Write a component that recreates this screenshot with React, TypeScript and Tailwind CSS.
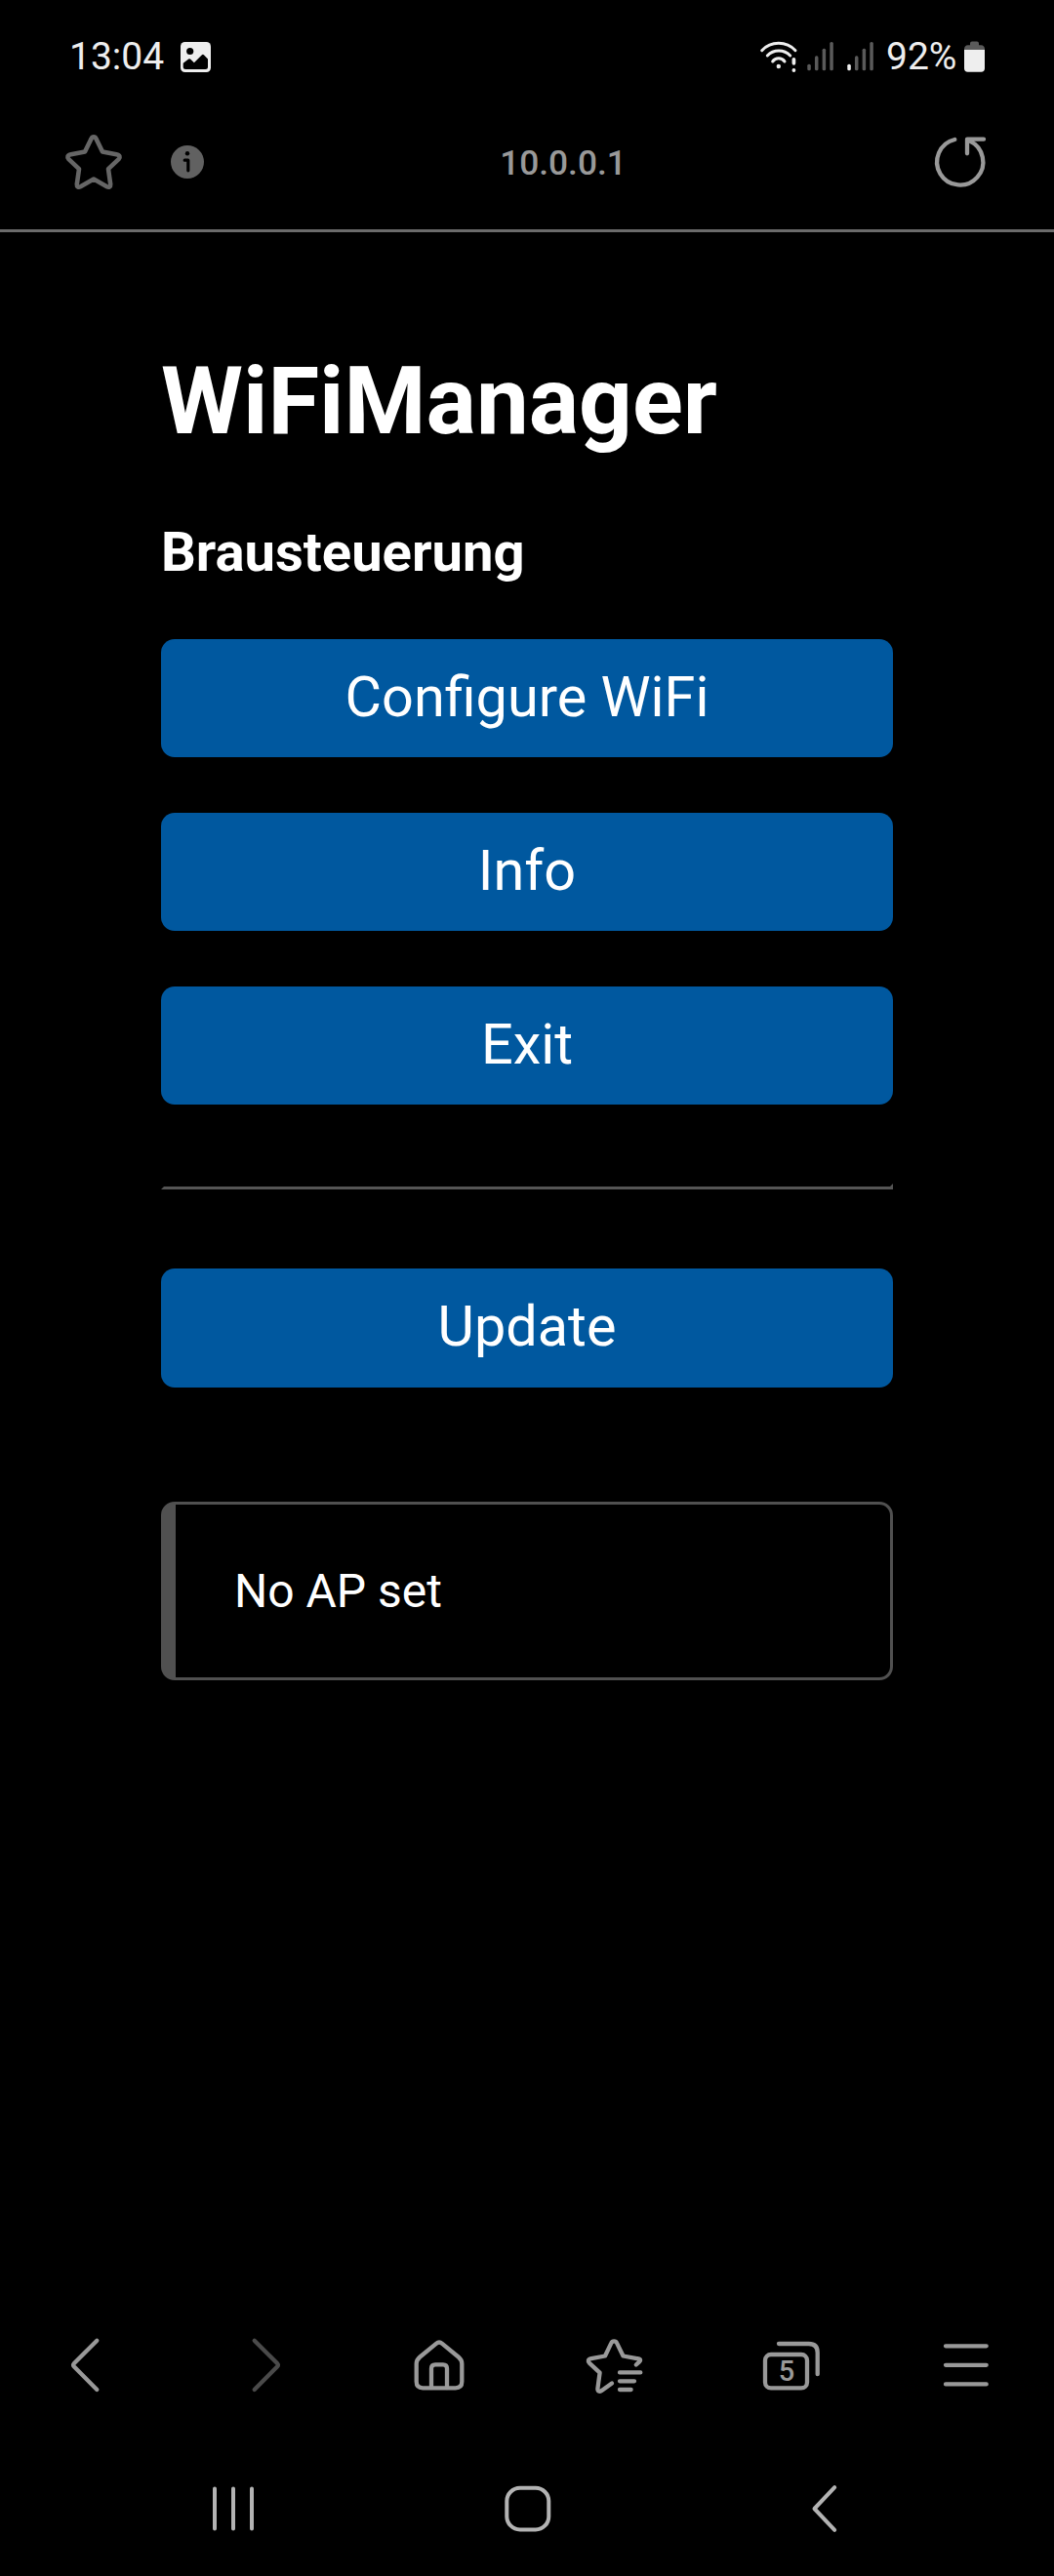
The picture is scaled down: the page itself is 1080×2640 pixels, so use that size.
import React from "react";

type IconProps = { children: React.ReactNode; className?: string; width?: number };

/** 64px stroked icon used by the browser and system bars. */
function Icon({ children, className = "", width = 4.3 }: IconProps) {
  return (
    <svg
      viewBox="0 0 64 64"
      fill="none"
      stroke="currentColor"
      strokeWidth={width}
      strokeLinecap="round"
      strokeLinejoin="round"
      className={`size-16 shrink-0 ${className}`}
    >
      {children}
    </svg>
  );
}

function SignalBars({ active }: { active: number }) {
  const tops = [24.7, 16.3, 8.7, 2];
  return (
    <svg viewBox="0 0 27 34" className="h-[34px] w-[27px] shrink-0">
      {tops.map((top, i) => (
        <rect
          key={top}
          x={0.3 + i * 7.67}
          y={top}
          width="3.5"
          height={31.3 - top}
          rx="1.6"
          fill={i < active ? "#eeeeee" : "#5a5a5a"}
        />
      ))}
    </svg>
  );
}

function StatusBar() {
  return (
    <header className="flex h-[115px] items-center pr-[71px] pl-[71px] text-[39px] leading-none text-[#eeeeee]">
      <span className="w-[114px] pt-px whitespace-nowrap">13:04</span>
      <svg viewBox="0 0 31 31" className="mt-px size-[31px]">
        <rect width="31" height="31" rx="4.5" fill="#eeeeee" />
        <circle cx="9.7" cy="9.5" r="3.6" fill="#000" />
        <path
          d="M2.7 21.7 8.2 17.5Q9.3 16.7 10.3 17.7L13.9 21.3 21.9 13.3Q22.9 12.4 23.9 13.3L28 17.6V25.5Q28 28 25.5 28H5.2Q2.7 28 2.7 25.5Z"
          fill="#000"
        />
      </svg>
      <div className="ml-auto flex items-center">
        <svg viewBox="0 0 40 34" className="mr-[9px] h-[34px] w-10" fill="none" stroke="#eeeeee" strokeWidth="3" strokeLinecap="round">
          <path d="M2.7 10.7A23.6 23.6 0 0 1 37 10.7M8.3 16A16.2 16.2 0 0 1 31.7 16M13.7 22A7.6 7.6 0 0 1 26 22" />
          <circle cx="19.8" cy="27" r="2.2" fill="#eeeeee" stroke="none" />
          <path d="M35.4 19.8V23.8" strokeWidth="3.7" />
          <circle cx="35.4" cy="31" r="1.9" fill="#eeeeee" stroke="none" />
        </svg>
        <SignalBars active={0} />
        <div className="w-[14px]" />
        <SignalBars active={1} />
        <span className="ml-[13px] w-[80px] pt-[2px] whitespace-nowrap">92%</span>
        <svg viewBox="0 0 21 32" className="h-8 w-[21px]">
          <path d="M6 2.5Q6 .5 8 .5H13Q15 .5 15 2.5V4.3H17Q21 4.5 21 8.5V12H0V8.5Q0 4.5 4 4.3H6Z" fill="#5a5a5a" />
          <path d="M0 9H21V28Q21 31.7 17.3 31.7H3.7Q0 31.7 0 28Z" fill="#eeeeee" />
        </svg>
      </div>
    </header>
  );
}

function AddressBar() {
  return (
    <div className="grid h-[123px] grid-cols-[1fr_auto_1fr] items-center border-b-[3px] border-[#6b6b6b] px-16 pb-[18px]">
      <div className="flex items-center">
        <Icon className="text-[#666666]" width={4.6}>
          <path d="M29.6 8.1C30.6 5.7 33.4 5.7 34.4 8.1L41 21.6 55.3 24.2C59 24.9 59.4 27.3 57.6 29.2L47 39.2 49.2 54.8C49.4 57.6 47.6 58.3 45.5 57.2L32 49.6 18.5 57.2C16.4 58.3 14.6 57.6 14.8 54.8L17 39.2 6.4 29.2C4.6 27.3 5 24.9 8.7 24.2L23 21.6Z" />
        </Icon>
        <svg viewBox="0 0 34 34" className="ml-[47px] size-[34px]">
          <circle cx="17" cy="17" r="17" fill="#616161" />
          <circle cx="17" cy="8.3" r="2.2" fill="#000" />
          <path d="M14.2 15.2H17.8V25.8" fill="none" stroke="#000" strokeWidth="3.2" strokeLinecap="round" strokeLinejoin="round" />
        </svg>
      </div>
      <span className="translate-x-[37px] pt-[3px] text-[35.3px] leading-none font-medium text-[#999999]">10.0.0.1</span>
      <Icon className="justify-self-end text-[#999999]">
        <path d="M26.3 9A23.6 23.6 0 1 0 41.3 10.4M56 8.7H39V23.3" />
      </Icon>
    </div>
  );
}

function PageButton({ children, className = "h-[121px]" }: { children: React.ReactNode; className?: string }) {
  return (
    <button className={`flex w-full justify-center rounded-[14px] bg-[#00589f] text-[57.6px] leading-[119px] text-white ${className}`}>
      {children}
    </button>
  );
}

function Portal() {
  return (
    <main className="mx-auto flex w-[750px] flex-1 flex-col text-white">
      <h1 className="mt-[117px] text-[96px] leading-[112px] font-bold">WiFiManager</h1>
      <h3 className="mt-[66px] text-[56.16px] leading-[66px] font-bold">Brausteuerung</h3>
      <div className="mt-[56px] flex flex-col gap-[57px]">
        <PageButton>Configure WiFi</PageButton>
        <PageButton>Info</PageButton>
        <PageButton>Exit</PageButton>
      </div>
      <hr className="mt-[81px] h-[6px] border-[3px] border-t-black border-r-[#555555] border-b-[#555555] border-l-black" />
      <div className="mt-[81px]">
        <PageButton className="h-[122px]">Update</PageButton>
      </div>
      <div className="mt-[117px] flex h-[183px] items-center rounded-[14px] border-[3px] border-l-[15px] border-[#505050] pl-[60px] text-[48px]">
        No AP set
      </div>
    </main>
  );
}

function BrowserToolbar() {
  return (
    <nav className="grid h-[154px] grid-cols-6 items-center justify-items-center text-[#999999]">
      <Icon>
        <path d="M41.3 5.7 18 29Q16.3 30.8 18 32.6L41.3 56" />
      </Icon>
      <Icon className="text-[#4a4a4a]">
        <path d="M22.7 5.7 46 29Q47.7 30.8 46 32.6L22.7 56" />
      </Icon>
      <Icon>
        <path d="M28.9 8.8Q32 6.2 35.1 8.8L51.7 22.5Q55.3 25.5 55.3 29.5V47.8Q55.3 54.3 48.8 54.3H15.2Q8.7 54.3 8.7 47.8V29.5Q8.7 25.5 12.3 22.5Z" />
        <path d="M24 54V34.3Q24 30.3 28 30.3H36Q40 30.3 40 34.3V54" />
      </Icon>
      <Icon>
        <path d="M53.8 30.5 57.2 27.4C59 25.4 57.6 23.8 54.6 24.1L40.5 21.5 34 8.1C33 5.7 29.4 5.7 28.4 8.1L22 21.5 8 24.1C4.2 24.9 4.2 27.3 6 28.9L16.6 38.6 14.4 55C14.2 57.7 16.2 58.4 18.2 57.2L29 49.6" />
        <path d="M37 38.4H58.3M37 47.3H52M37 56H48.6" />
      </Icon>
      <Icon>
        <rect x="6" y="20" width="43" height="34.4" rx="6" />
        <path d="M20 9H50.7Q59.7 9 59.7 18V40.2" />
        <text x="28" y="47.2" textAnchor="middle" fill="currentColor" stroke="none" className="text-[29px] font-medium">
          5
        </text>
      </Icon>
      <Icon>
        <path d="M11 11.3H52.7M11 30.8H52.7M11 50.4H52.7" />
      </Icon>
    </nav>
  );
}

function SystemNav() {
  return (
    <nav className="flex h-[138px] items-center justify-center gap-[238px] text-[#b3b3b3]">
      <Icon width={4}>
        <path d="M14 11.5V52.5M33 11.5V52.5M52 11.5V52.5" />
      </Icon>
      <Icon width={4}>
        <rect x="11.3" y="10.8" width="43" height="42.6" rx="13.5" />
      </Icon>
      <Icon width={4}>
        <path d="M45.2 10.2 24.5 32 45.2 53.8" />
      </Icon>
    </nav>
  );
}

export default function App() {
  return (
    <div className="flex h-[2640px] w-[1080px] flex-col overflow-hidden bg-black font-['Roboto',sans-serif]">
      <StatusBar />
      <AddressBar />
      <Portal />
      <BrowserToolbar />
      <SystemNav />
    </div>
  );
}
